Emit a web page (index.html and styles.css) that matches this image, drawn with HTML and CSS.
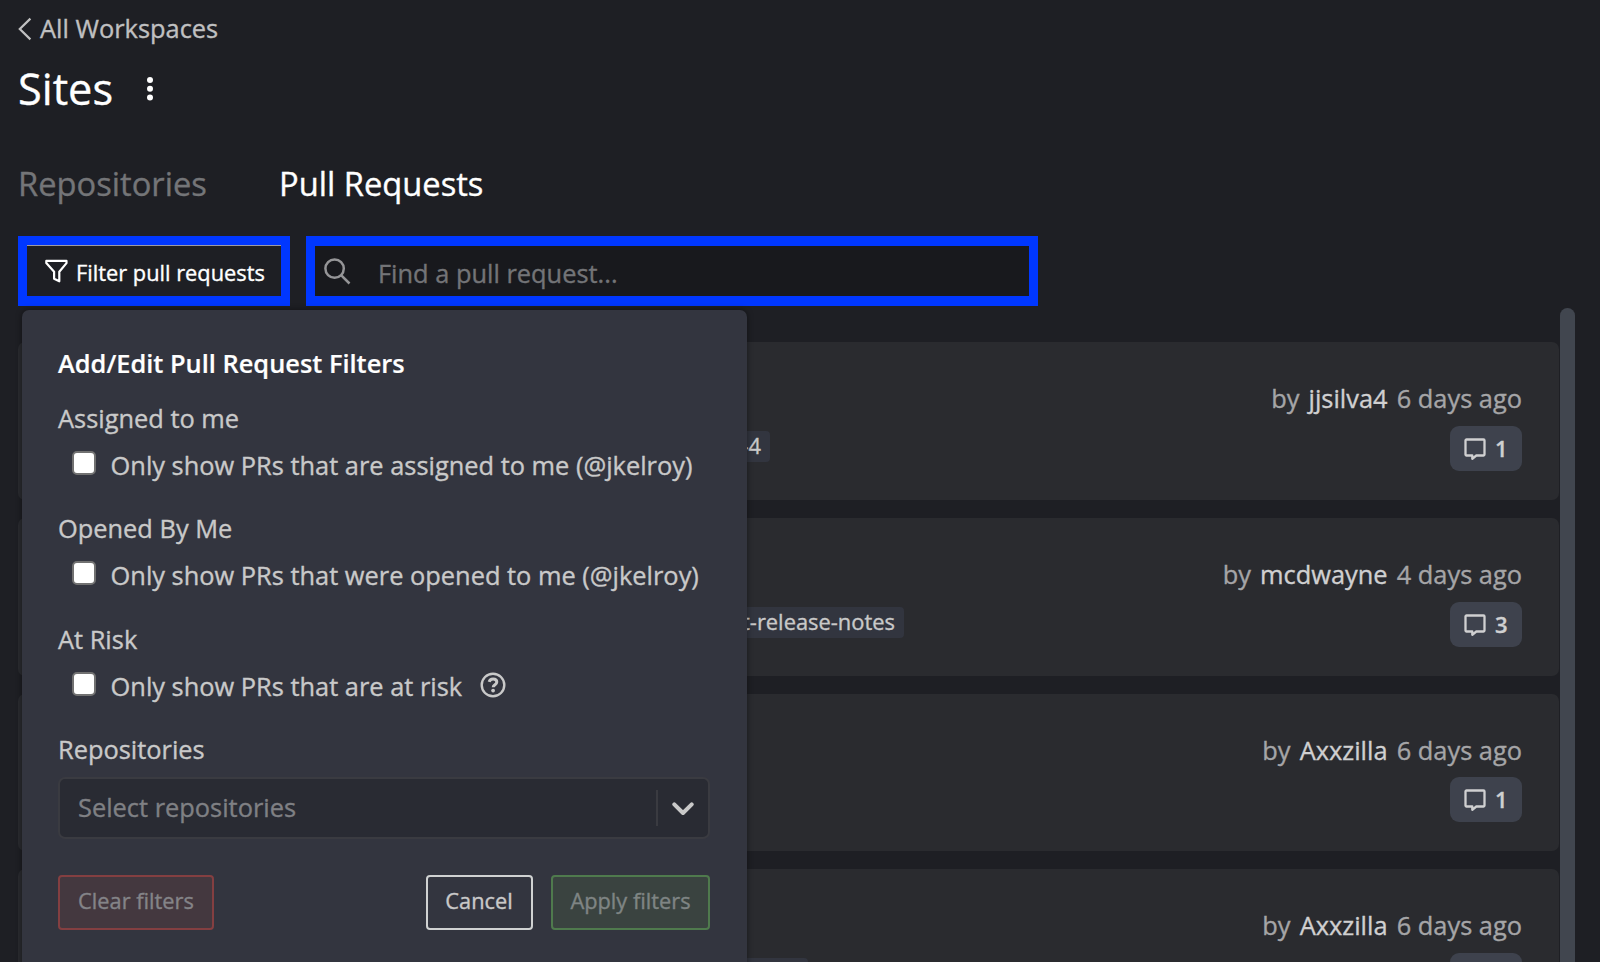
FILE: index.html
```html
<!DOCTYPE html>
<html lang="en">
<head>
<meta charset="utf-8">
<title>Sites - Pull Requests</title>
<link rel="stylesheet" href="styles.css">
</head>
<body>
<main class="page">
  <a class="back">
    <svg class="back-icon" width="14" height="24" viewBox="0 0 14 24"><path d="M12.4 1.6 1.8 12l10.6 10.4"/></svg>
    <span class="back-label">All Workspaces</span>
  </a>
  <header class="heading">
    <h1 class="title">Sites</h1>
    <svg class="kebab" width="8" height="26" viewBox="0 0 8 26"><circle cx="4" cy="4" r="3"/><circle cx="4" cy="12.8" r="3"/><circle cx="4" cy="21.5" r="3"/></svg>
  </header>
  <nav class="tabs">
    <a class="tab">Repositories</a>
    <a class="tab tab-active">Pull Requests</a>
  </nav>
  <div class="controls">
    <div class="filter-wrap">
      <button class="filter-button">
        <svg class="funnel" width="23" height="24" viewBox="0 0 23 24"><path d="M1.3 1.9h20.2v2.2l-7.2 8.6v9.6l-5.2-2.6v-7L1.3 4.1z"/></svg>
        <span>Filter pull requests</span>
      </button>
      <section class="popover">
        <h2 class="popover-title">Add/Edit Pull Request Filters</h2>
        <div class="group">
          <div class="group-label">Assigned to me</div>
          <label class="option"><span class="box"></span><span class="option-text">Only show PRs that are assigned to me (@jkelroy)</span></label>
        </div>
        <div class="group">
          <div class="group-label">Opened By Me</div>
          <label class="option"><span class="box"></span><span class="option-text">Only show PRs that were opened to me (@jkelroy)</span></label>
        </div>
        <div class="group">
          <div class="group-label">At Risk</div>
          <label class="option"><span class="box"></span><span class="option-text">Only show PRs that are at risk</span>
            <svg class="help" width="26" height="26" viewBox="0 0 26 26"><circle cx="13" cy="13" r="11.3"/><path d="M9.2 9.9c.5-2 2-2.9 3.9-2.9 2.1 0 3.7 1.2 3.7 3.1 0 2.6-3.6 2.7-3.6 5.2"/><circle class="help-dot" cx="13.1" cy="18.6" r="1.9"/></svg>
          </label>
        </div>
        <div class="group-label">Repositories</div>
        <div class="select">
          <span class="select-text">Select repositories</span>
          <span class="select-toggle"><svg class="chevron" width="22" height="14" viewBox="0 0 22 14"><path d="m2.3 2.3 8.7 8.7 8.7-8.7"/></svg></span>
        </div>
        <div class="actions">
          <button class="button button-clear">Clear filters</button>
          <button class="button button-cancel">Cancel</button>
          <button class="button button-apply">Apply filters</button>
        </div>
      </section>
    </div>
    <div class="search">
      <svg class="search-icon" width="27" height="27" viewBox="0 0 27 27"><circle cx="10.6" cy="10.6" r="9.2"/><path d="m17.3 17.3 8.2 8.2"/></svg>
      <span class="search-text">Find a pull request...</span>
    </div>
  </div>
  <div class="list">
    <div class="cards">
      <article class="card">
        <div class="branch branch-a">-4</div>
        <div class="meta">
          <div class="byline">by <span class="author">jjsilva4</span> 6 days ago</div>
          <div class="comments"><svg class="bubble" width="22" height="23" viewBox="0 0 22 23"><path d="M2.5 1.5h17a1 1 0 0 1 1 1v14a1 1 0 0 1-1 1h-7.2l-4 3.3v-3.3H2.5a1 1 0 0 1-1-1v-14a1 1 0 0 1 1-1z"/></svg><span>1</span></div>
        </div>
      </article>
      <article class="card">
        <div class="branch branch-b">t-release-notes</div>
        <div class="meta">
          <div class="byline">by <span class="author">mcdwayne</span> 4 days ago</div>
          <div class="comments"><svg class="bubble" width="22" height="23" viewBox="0 0 22 23"><path d="M2.5 1.5h17a1 1 0 0 1 1 1v14a1 1 0 0 1-1 1h-7.2l-4 3.3v-3.3H2.5a1 1 0 0 1-1-1v-14a1 1 0 0 1 1-1z"/></svg><span>3</span></div>
        </div>
      </article>
      <article class="card">
        <div class="meta">
          <div class="byline">by <span class="author">Axxzilla</span> 6 days ago</div>
          <div class="comments"><svg class="bubble" width="22" height="23" viewBox="0 0 22 23"><path d="M2.5 1.5h17a1 1 0 0 1 1 1v14a1 1 0 0 1-1 1h-7.2l-4 3.3v-3.3H2.5a1 1 0 0 1-1-1v-14a1 1 0 0 1 1-1z"/></svg><span>1</span></div>
        </div>
      </article>
      <article class="card">
        <div class="branch branch-c"></div>
        <div class="meta">
          <div class="byline">by <span class="author">Axxzilla</span> 6 days ago</div>
          <div class="comments"></div>
        </div>
      </article>
    </div>
    <div class="scrollbar"></div>
  </div>
</main>
</body>
</html>
```

FILE: styles.css
```css
* { box-sizing: border-box; }
html, body { margin: 0; height: 962px; overflow: hidden; }
body {
  background: #1e1f24;
  color: #c9c9c9;
  font-family: "Open Sans", "Noto Sans", sans-serif;
  font-size: 25.4px;
  line-height: 36px;
  white-space: nowrap;
  -webkit-text-stroke: 0.35px currentColor;
}
button { font-family: inherit; white-space: nowrap; }
svg { display: block; flex: none; fill: none; stroke: currentColor; }
.page {
  height: 962px;
  padding: 10px 25px 0 18px;
  overflow: hidden;
  display: flex;
  flex-direction: column;
}
.back { display: flex; align-items: center; gap: 8px; height: 36px; color: #c0c0c1; }
.back-icon { margin-top: 2px; stroke-width: 2.2; }
.heading { display: flex; align-items: center; height: 60px; margin-top: 12px; color: #fff; }
.title { margin: 2px 0 0; font-size: 43.3px; font-weight: 400; line-height: 60px; width: 128px; }
.kebab { fill: #fff; stroke: none; margin-top: 2px; }
.tabs { display: flex; height: 46px; margin-top: 42px; font-size: 32.7px; line-height: 48px; color: #747578; }
.tab { width: 261px; }
.tab-active { color: #fff; }
.controls { display: flex; gap: 16px; height: 70px; margin-top: 30px; }
.filter-wrap { position: relative; width: 272px; height: 70px; }
.filter-button {
  width: 100%;
  height: 100%;
  padding: 0 0 0 18px;
  border: 9px solid #0037ff;
  border-bottom-width: 10px;
  background: #1e1f24;
  box-shadow: inset 0 1px 0 #9c9aa6;
  color: #fff;
  display: flex;
  align-items: center;
  gap: 8px;
  font-size: 21.8px;
  line-height: 32px;
}
.filter-button span { padding-top: 5px; }
.funnel { stroke-width: 2.2; stroke-linejoin: round; margin-top: 1px; }
.search {
  width: 732px;
  height: 70px;
  border: 10px solid #0037ff;
  border-left-width: 9px;
  border-right-width: 9px;
  background: #18191d;
  display: flex;
  align-items: center;
  padding-left: 9px;
  color: #737477;
}
.search-icon { color: #959597; stroke-width: 2.5; }
.search-text { margin-left: 27px; padding-top: 3px; }
.popover {
  position: absolute;
  left: 4px;
  top: 74px;
  z-index: 2;
  width: 725px;
  height: 700px;
  padding: 35px 36px;
  border-radius: 7px;
  background: #33353f;
  box-shadow: 0 0 6px rgba(0, 0, 0, 0.45);
}
.popover-title { margin: 0 0 18px; font-size: 25.4px; line-height: 37px; font-weight: 600; color: #fff; -webkit-text-stroke: 0.2px #fff; }
.group { height: 110.3px; }
.group-label { height: 36px; }
.option { display: flex; height: 36px; margin-top: 11px; padding-left: 14.4px; }
.box { flex: none; width: 24px; height: 24px; margin-top: 4px; border: 2px solid #717171; border-radius: 5px; background: #fff; }
.option-text { margin-left: 14.2px; }
.help { margin: 4px 0 0 18px; stroke-width: 2.4; }
.help path { stroke-width: 3; }
.help-dot { fill: currentColor; stroke: none; }
.select {
  display: flex;
  align-items: center;
  height: 62px;
  width: 652px;
  margin-top: 10px;
  padding-left: 18px;
  border: 2px solid #3a3b41;
  border-radius: 7px;
  background: #292b33;
  color: #7f8084;
}
.select-text { flex: 1; padding-bottom: 2px; }
.select-toggle { width: 52px; height: 36px; border-left: 2px solid #3a3b41; display: flex; align-items: center; padding-left: 14px; color: #c9c9c9; }
.chevron { stroke-width: 4; stroke-linecap: round; stroke-linejoin: round; margin-top: 2px; }
.actions { display: flex; margin-top: 36px; width: 652px; }
.button { height: 55px; padding: 0 0 2px; border: 2px solid; border-radius: 4px; font-size: 21.8px; line-height: 32px; background: transparent; }
.button-clear { width: 156px; margin-right: auto; border-color: #843f41; background: #44383f; color: #848488; }
.button-cancel { width: 107px; padding-right: 1px; border-color: #d0d2d2; color: #c9c9c9; margin-right: 18px; }
.button-apply { width: 159px; border-color: #4f7a4d; background: #3a4340; color: #7f8584; }
.list { display: flex; height: 660px; margin-top: 2px; gap: 1px; }
.cards { width: 1541px; padding-top: 34px; display: flex; flex-direction: column; gap: 18px; }
.card { display: flex; flex: none; height: 157.8px; padding: 38px 37px 0 0; border-radius: 7px; background: #2a2b2f; }
.branch {
  height: 31px;
  margin: 51px 0 0 690px;
  padding-right: 9px;
  border-radius: 4px;
  background: #32353f;
  font-size: 21.9px;
  line-height: 30px;
  text-align: right;
}
.branch-a { width: 62px; }
.branch-b { width: 196px; }
.branch-c { width: 100px; }
.meta { margin-left: auto; display: flex; flex-direction: column; align-items: flex-end; color: #a5a5a7; }
.author { color: #d0d0d1; margin: 0 2.5px; }
.comments {
  display: flex;
  align-items: center;
  gap: 9px;
  width: 72px;
  height: 45px;
  margin-top: 9.8px;
  padding-left: 14px;
  border-radius: 9px;
  background: #3e424d;
  color: #d0d0d1;
  font-size: 22px;
  font-weight: 600;
}
.comments span { padding-bottom: 1px; }
.bubble { stroke-width: 2.3; stroke-linejoin: round; margin-top: 2px; }
.scrollbar { width: 15px; border-radius: 8px 8px 0 0; background: #41464f; }
```
